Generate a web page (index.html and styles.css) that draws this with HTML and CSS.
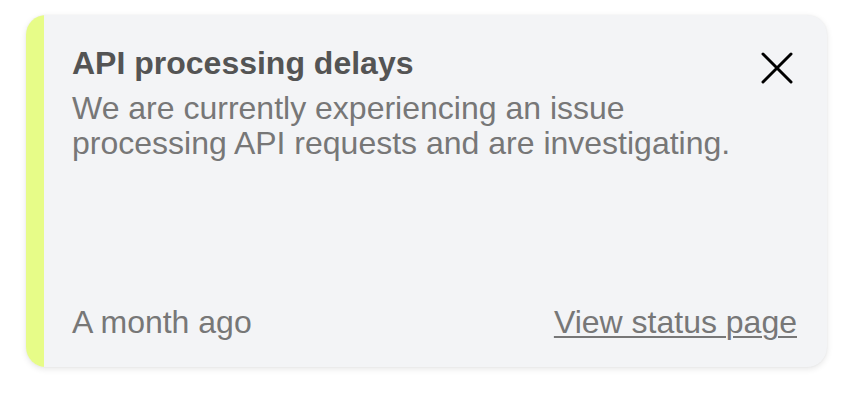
FILE: index.html
```html
<!DOCTYPE html>
<html lang="en">
<head>
<meta charset="utf-8">
<title>API processing delays</title>
<link rel="stylesheet" href="styles.css">
</head>
<body>
<div class="card">
  <div class="strip"></div>
  <div class="content">
    <div class="header">
      <div class="text">
        <h2 class="title">API processing delays</h2>
        <p class="message">We are currently experiencing an issue processing API requests and are investigating.</p>
      </div>
      <button class="close" aria-label="Close">
        <svg width="32" height="32" viewBox="0 0 32 32" fill="none" stroke="#000" stroke-width="3" stroke-linecap="round">
          <path d="M2 2 L30 30 M30 2 L2 30"/>
        </svg>
      </button>
    </div>
    <div class="footer">
      <span class="time">A month ago</span>
      <a class="link" href="#">View status page</a>
    </div>
  </div>
</div>
</body>
</html>
```

FILE: styles.css
```css
html, body {
  margin: 0;
  background: #ffffff;
}
body {
  padding: 15px 25px 27px 26px;
  font-family: "Liberation Sans", Arial, Helvetica, sans-serif;
}
.card {
  display: flex;
  height: 352px;
  background: #f3f4f6;
  border-radius: 20px;
  overflow: hidden;
  box-shadow: 0 2px 6px rgba(0, 0, 0, 0.10), 0 0 2px rgba(0, 0, 0, 0.05);
}
.strip {
  width: 18px;
  flex: none;
  background: #e7fc88;
}
.content {
  flex: 1;
  display: flex;
  flex-direction: column;
  justify-content: space-between;
  padding: 30px 30px 27px 28px;
}
.header {
  display: flex;
  gap: 12px;
  align-items: flex-start;
}
.text {
  flex: 1;
}
.title {
  margin: 0 0 10px 0;
  font-size: 32px;
  line-height: 36px;
  font-weight: 700;
  color: #545454;
}
.message {
  margin: 0;
  font-size: 32px;
  line-height: 35px;
  color: #777777;
}
.close {
  width: 40px;
  height: 40px;
  margin-top: 3px;
  padding: 0;
  border: 0;
  background: transparent;
  display: flex;
  align-items: center;
  justify-content: center;
  flex: none;
}
.footer {
  display: flex;
  justify-content: space-between;
  align-items: baseline;
  font-size: 32px;
  line-height: 36px;
  color: #777777;
}
.link {
  color: #777777;
  text-decoration: underline;
  text-decoration-thickness: 2px;
  text-underline-offset: 3px;
}
```
